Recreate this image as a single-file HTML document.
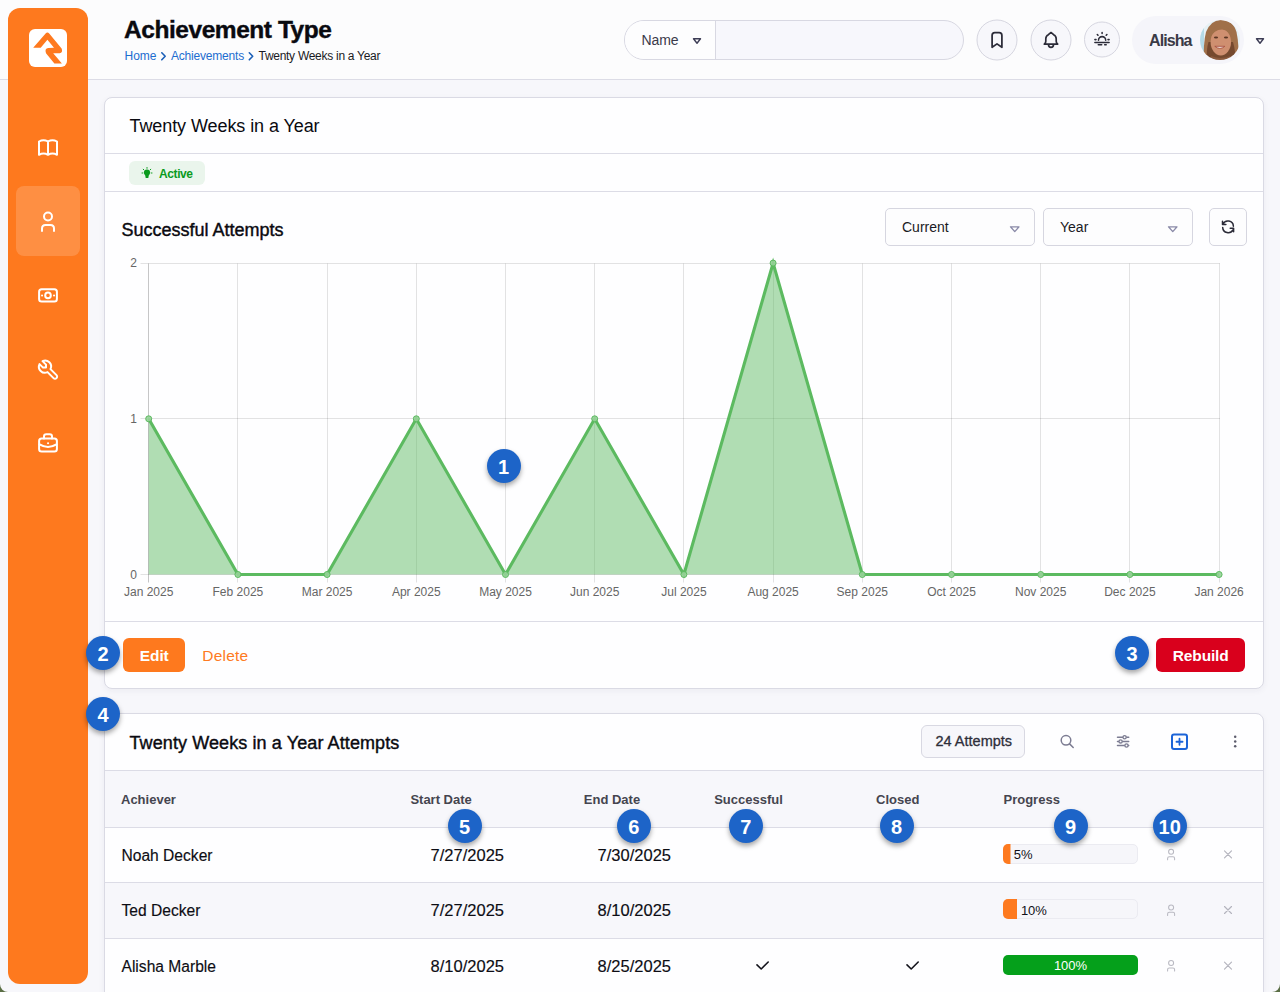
<!DOCTYPE html>
<html><head><meta charset="utf-8">
<style>
*{box-sizing:border-box;margin:0;padding:0}
html,body{width:1280px;height:992px;overflow:hidden}
body{background:#f7f7fb;font-family:"Liberation Sans",sans-serif;color:#0d0d12;position:relative}
.a{position:absolute}
.t{position:absolute;white-space:nowrap;line-height:1}
#hdr{left:0;top:0;width:1280px;height:80px;background:#fcfcfd;border-bottom:1px solid #dcdce6}
#side{left:8px;top:8px;width:80px;height:976px;background:#fe791e;border-radius:12px}
.card{position:absolute;background:#fefeff;border:1px solid #dadae4;border-radius:8px;box-shadow:0 2px 6px rgba(40,40,80,0.05)}
.hl{position:absolute;height:1px;background:#dcdce6}
.badge{position:absolute;width:34px;height:34px;border-radius:50%;background:#1d64c8;color:#fff;font-weight:700;font-size:20px;text-align:center;line-height:36.6px;box-shadow:0 3px 5px rgba(0,0,0,0.35)}
.ax{font-family:"Liberation Sans",sans-serif;font-size:12px;fill:#666}
</style></head><body>

<div id="hdr" class="a"></div>

<div class="t" style="left:124px;top:17.9px;font-size:24.5px;font-weight:700;letter-spacing:-0.45px;color:#0a0a10;-webkit-text-stroke:0.4px #0a0a10">Achievement Type</div>
<div class="t" style="left:124.5px;top:50.1px;font-size:12px;color:#1c6dd0">Home</div>
<svg class="a" style="left:0;top:0" width="400" height="80"><path d="M161.8,52.8 L165.2,56.3 L161.8,59.8" fill="none" stroke="#1a5fb8" stroke-width="1.6" stroke-linecap="round" stroke-linejoin="round"/><path d="M249.3,52.8 L252.7,56.3 L249.3,59.8" fill="none" stroke="#1a5fb8" stroke-width="1.6" stroke-linecap="round" stroke-linejoin="round"/></svg>
<div class="t" style="left:171px;top:50.1px;font-size:12px;letter-spacing:-0.2px;color:#1c6dd0">Achievements</div>
<div class="t" style="left:258.5px;top:50.1px;font-size:12px;letter-spacing:-0.28px;color:#1a1a24">Twenty Weeks in a Year</div>

<div class="a" style="left:624px;top:20px;width:340px;height:40px;border:1px solid #d8d8e2;border-radius:20px;background:#f7f7fc;overflow:hidden">
  <div class="a" style="left:0;top:0;width:91px;height:38px;background:#fdfdfe;border-right:1px solid #d8d8e2"></div>
</div>
<div class="t" style="left:641.5px;top:33.1px;font-size:14px;letter-spacing:-0.1px;color:#3a3a4a">Name</div>
<svg class="a" style="left:0;top:0" width="1280" height="80">
<path d="M693.5,38.8 L700.5,38.8 L697,43.2 Z" fill="none" stroke="#3c3c55" stroke-width="1.4" stroke-linejoin="round"/>
<circle cx="997" cy="40" r="20" fill="#f7f7fb" stroke="#d6d6e0" stroke-width="1"/>
<circle cx="1051" cy="40" r="20" fill="#f7f7fb" stroke="#d6d6e0" stroke-width="1"/>
<circle cx="1102" cy="39.5" r="17.5" fill="#f7f7fb" stroke="#d6d6e0" stroke-width="1"/>
<g fill="none" stroke="#2b2b38" stroke-width="1.9" stroke-linecap="round" stroke-linejoin="round">
<path d="M992.1,47.3 V35.4 Q992.1,32.7 994.8,32.7 H999.2 Q1001.9,32.7 1001.9,35.4 V47.3 L997,43.9 Z" stroke-width="1.75"/>
<path d="M1044.3,44.1 H1057.7 Q1056.2,42.8 1056.2,41.2 V38.8 Q1056.2,35.9 1053.6,34.7 Q1052,33.2 1051,32.5 Q1050,33.2 1048.4,34.7 Q1045.8,35.9 1045.8,38.8 V41.2 Q1045.8,42.8 1044.3,44.1 Z M1048.5,44.4 A2.5,2.9 0 0 0 1053.5,44.4" stroke-width="1.7"/>
<path d="M1094.9,42.4 H1109.1 M1098.5,40.2 A3.6,3.6 0 0 1 1105.7,40.2 M1102.1,32.4 v1.1 M1097.3,34.5 l0.7,0.7 M1106.9,34.5 l-0.7,0.7 M1094.9,39.6 h1.1 M1108,39.6 h1.1 M1098.3,44.8 h3.4 M1104.7,44.8 h1.5" stroke-width="1.55"/>
</g>
</svg>
<div class="a" style="left:1132px;top:16px;width:112px;height:48px;border-radius:24px;background:#f5f5fa"></div>
<div class="t" style="left:1149px;top:33.1px;font-size:16px;font-weight:700;letter-spacing:-0.9px;color:#3a3a46">Alisha</div>
<svg class="a" style="left:1196px;top:16px" width="48" height="48" viewBox="1196 16 48 48">
<defs><clipPath id="avc"><circle cx="1220" cy="40" r="20"/></clipPath>
<filter id="blr" x="-20%" y="-20%" width="140%" height="140%"><feGaussianBlur stdDeviation="0.7"/></filter></defs>
<g clip-path="url(#avc)"><g filter="url(#blr)">
<rect x="1196" y="16" width="48" height="48" fill="#e6f1f5"/>
<rect x="1199" y="26" width="5" height="26" fill="#b5dbe8"/>
<path d="M1204,62 Q1203,44 1206,32 Q1211,20 1221,20 Q1233,20 1236.5,32 Q1239.5,46 1238,62 Z" fill="#a06f4a"/>
<path d="M1207,62 Q1206,50 1208.5,42 L1233,42 Q1236,52 1235,62 Z" fill="#754a2f"/>
<ellipse cx="1220.8" cy="42" rx="10.2" ry="13.4" fill="#cf8f6f"/>
<path d="M1210,38 Q1211,27 1219,26 Q1228,25.5 1231.5,33 Q1232,36 1231.5,38 Q1229,30 1222,29.5 Q1214,29.5 1210,38 Z" fill="#a06f4a"/>
<path d="M1211,56 Q1220.8,60 1230.6,56 L1231,64 L1211,64 Z" fill="#8a5a3e"/>
<ellipse cx="1216" cy="37.6" rx="2.1" ry="1" fill="#5a3526"/>
<ellipse cx="1226" cy="37.6" rx="2.1" ry="1" fill="#5a3526"/>
<path d="M1214.8,46.3 Q1220,50.5 1224.8,46.3 Z" fill="#f4ece8" stroke="#a84f40" stroke-width="0.9"/>
</g></g></svg>
<svg class="a" style="left:0;top:0" width="1280" height="80"><path d="M1256.5,38.8 L1263.5,38.8 L1260,43.2 Z" fill="none" stroke="#3c3c55" stroke-width="1.4" stroke-linejoin="round"/></svg>
<div id="side" class="a"></div>
<div class="a" style="left:16px;top:186px;width:64px;height:70px;border-radius:8px;background:rgba(255,255,255,0.17)"></div>
<svg class="a" style="left:0;top:0" width="96" height="992" viewBox="0 0 96 992">
<rect x="29" y="29" width="38" height="38" rx="6" fill="#fff"/>
<path d="M33.2,47.8 L45.6,33.4 Q47.4,31.6 49.2,33.4 L61.6,48.6 Q63.2,52.8 59.6,53.2 L53.2,53.2 L61.9,63.5 L54.4,63.5 L46,53.2 Q44.3,48.3 48.3,48 L54,47.8 L47.4,39.7 L40.7,47.8 Z" fill="#fe791e"/>
<g fill="none" stroke="#fff" stroke-width="2" stroke-linecap="round" stroke-linejoin="round">
<path d="M39,141.5 Q43.5,139 48,141.5 Q52.5,139 57,141.5 L57,154.8 Q52.5,152.3 48,154.8 Q43.5,152.3 39,154.8 Z M48,141.5 L48,154.8"/>
<circle cx="48" cy="216.5" r="4"/>
<path d="M42,231 L42,228.5 Q42,225 45.5,225 L50.5,225 Q54,225 54,228.5 L54,231"/>
<rect x="39.1" y="289.2" width="17.8" height="12.4" rx="2.5"/>
<circle cx="48" cy="295.4" r="2.8"/>
<path d="M42,295.4 h0.1 M54,295.4 h0.1"/>
<path d="M41.3,366.1 h3v-3 l-3.5,-3.5 a6,6 0 0 1 8,8 l6,6 a2,2 0 0 1 -3,3 l-6,-6 a6,6 0 0 1 -8,-8 l3.5,3.5" transform="translate(1.7,1.5)"/>
<rect x="39.1" y="438.6" width="17.8" height="13" rx="2.5"/>
<path d="M44,438.6 V436.5 Q44,434.2 46.3,434.2 H49.7 Q52,434.2 52,436.5 V438.6"/>
<path d="M39.5,444.3 Q48,449.5 56.5,444.3"/>
<path d="M48,443.3 h0.1"/>
</g>
</svg>



<div class="card" style="left:104px;top:97px;width:1160px;height:592px"></div>
<div class="hl" style="left:105px;top:153px;width:1158px"></div>
<div class="hl" style="left:105px;top:191px;width:1158px"></div>
<div class="hl" style="left:105px;top:621px;width:1158px"></div>
<div class="t" style="left:129.5px;top:117.2px;font-size:18px;letter-spacing:-0.08px;color:#0a0a10">Twenty Weeks in a Year</div>
<div class="a" style="left:129px;top:161px;width:76px;height:24px;border-radius:6px;background:#eaf5ec"></div>
<svg class="a" style="left:0;top:0" width="300" height="200"><g fill="#0b9b1e"><circle cx="147" cy="172.6" r="3.1"/><path d="M145,174 L149,174 L148.3,178 L145.7,178 Z"/></g><g stroke="#0b9b1e" stroke-width="1" stroke-linecap="round"><path d="M147,167.5 v0.8 M143.2,169.2 l0.6,0.6 M150.8,169.2 l-0.6,0.6 M142,173 h0.8 M151.2,173 h0.8"/></g></svg>
<div class="t" style="left:159px;top:167.6px;font-size:12px;font-weight:700;letter-spacing:-0.4px;color:#0b9b1e">Active</div>
<div class="t" style="left:121.5px;top:220.7px;font-size:18px;letter-spacing:0px;color:#0a0a10;-webkit-text-stroke:0.4px #0a0a10">Successful Attempts</div>
<div class="a" style="left:885px;top:208px;width:150px;height:38px;border:1px solid #d6d6e0;border-radius:5px;background:#fdfdfe"></div>
<div class="a" style="left:1043px;top:208px;width:150px;height:38px;border:1px solid #d6d6e0;border-radius:5px;background:#fdfdfe"></div>
<div class="a" style="left:1209px;top:208px;width:38px;height:38px;border:1px solid #d6d6e0;border-radius:5px;background:#fdfdfe"></div>
<div class="t" style="left:902px;top:219.9px;font-size:14px;color:#1a1a24">Current</div>
<div class="t" style="left:1060px;top:219.9px;font-size:14px;color:#1a1a24">Year</div>
<svg class="a" style="left:0;top:0" width="1280" height="260">
<path d="M1010.5,226.8 L1019,226.8 L1014.75,231.6 Z" fill="none" stroke="#8a8aa8" stroke-width="1.3" stroke-linejoin="round"/>
<path d="M1168.5,226.8 L1177,226.8 L1172.75,231.6 Z" fill="none" stroke="#8a8aa8" stroke-width="1.3" stroke-linejoin="round"/>
<g fill="none" stroke="#2b2b38" stroke-width="1.6" stroke-linecap="round" stroke-linejoin="round">
<path d="M1222.9,224.2 A5.5,5.5 0 0 1 1233.4,226.2 M1222.5,221.2 V224.6 H1225.9" stroke-width="1.5"/>
<path d="M1222.7,227.6 A5.5,5.5 0 0 0 1233,229.9 M1230.2,228.3 H1233.6 V231.7" stroke-width="1.5"/>
</g></svg>
<svg class="a" style="left:0;top:0" width="1280" height="700">
<path d="M140.5,263.5 H1220" stroke="rgba(0,0,0,0.11)" stroke-width="1"/>
<path d="M140.5,418.5 H1220" stroke="rgba(0,0,0,0.11)" stroke-width="1"/>
<path d="M237.5,263.5 V582.5" stroke="rgba(0,0,0,0.11)" stroke-width="1"/>
<path d="M327.5,263.5 V582.5" stroke="rgba(0,0,0,0.11)" stroke-width="1"/>
<path d="M416.5,263.5 V582.5" stroke="rgba(0,0,0,0.11)" stroke-width="1"/>
<path d="M505.5,263.5 V582.5" stroke="rgba(0,0,0,0.11)" stroke-width="1"/>
<path d="M594.5,263.5 V582.5" stroke="rgba(0,0,0,0.11)" stroke-width="1"/>
<path d="M683.5,263.5 V582.5" stroke="rgba(0,0,0,0.11)" stroke-width="1"/>
<path d="M773.5,263.5 V582.5" stroke="rgba(0,0,0,0.11)" stroke-width="1"/>
<path d="M862.5,263.5 V582.5" stroke="rgba(0,0,0,0.11)" stroke-width="1"/>
<path d="M951.5,263.5 V582.5" stroke="rgba(0,0,0,0.11)" stroke-width="1"/>
<path d="M1040.5,263.5 V582.5" stroke="rgba(0,0,0,0.11)" stroke-width="1"/>
<path d="M1129.5,263.5 V582.5" stroke="rgba(0,0,0,0.11)" stroke-width="1"/>
<path d="M1219.5,263.5 V582.5" stroke="rgba(0,0,0,0.11)" stroke-width="1"/>
<polygon points="148.7,574.5 148.7,418.8 237.9,574.5 327.1,574.5 416.3,418.8 505.5,574.5 594.7,418.8 683.9,574.5 773.1,263.1 862.3,574.5 951.5,574.5 1040.7,574.5 1129.9,574.5 1219.1,574.5 1219.1,574.5" fill="rgba(92,186,96,0.48)"/>
<path d="M140.5,574.5 H1220" stroke="rgba(0,0,0,0.11)" stroke-width="1"/>
<path d="M148.5,263.5 V582.5" stroke="rgba(0,0,0,0.22)" stroke-width="1"/>
<polyline points="148.7,418.8 237.9,574.5 327.1,574.5 416.3,418.8 505.5,574.5 594.7,418.8 683.9,574.5 773.1,263.1 862.3,574.5 951.5,574.5 1040.7,574.5 1129.9,574.5 1219.1,574.5" fill="none" stroke="#5cba60" stroke-width="3.1" stroke-linejoin="miter"/>
<circle cx="148.7" cy="418.8" r="3" fill="rgba(150,210,152,0.9)" stroke="#5cba60" stroke-width="1"/>
<circle cx="237.9" cy="574.5" r="3" fill="rgba(150,210,152,0.9)" stroke="#5cba60" stroke-width="1"/>
<circle cx="327.1" cy="574.5" r="3" fill="rgba(150,210,152,0.9)" stroke="#5cba60" stroke-width="1"/>
<circle cx="416.3" cy="418.8" r="3" fill="rgba(150,210,152,0.9)" stroke="#5cba60" stroke-width="1"/>
<circle cx="505.5" cy="574.5" r="3" fill="rgba(150,210,152,0.9)" stroke="#5cba60" stroke-width="1"/>
<circle cx="594.7" cy="418.8" r="3" fill="rgba(150,210,152,0.9)" stroke="#5cba60" stroke-width="1"/>
<circle cx="683.9" cy="574.5" r="3" fill="rgba(150,210,152,0.9)" stroke="#5cba60" stroke-width="1"/>
<circle cx="773.1" cy="263.1" r="3" fill="rgba(150,210,152,0.9)" stroke="#5cba60" stroke-width="1"/>
<circle cx="862.3" cy="574.5" r="3" fill="rgba(150,210,152,0.9)" stroke="#5cba60" stroke-width="1"/>
<circle cx="951.5" cy="574.5" r="3" fill="rgba(150,210,152,0.9)" stroke="#5cba60" stroke-width="1"/>
<circle cx="1040.7" cy="574.5" r="3" fill="rgba(150,210,152,0.9)" stroke="#5cba60" stroke-width="1"/>
<circle cx="1129.9" cy="574.5" r="3" fill="rgba(150,210,152,0.9)" stroke="#5cba60" stroke-width="1"/>
<circle cx="1219.1" cy="574.5" r="3" fill="rgba(150,210,152,0.9)" stroke="#5cba60" stroke-width="1"/>
<text class="ax" x="137" y="267.40000000000003" text-anchor="end">2</text>
<text class="ax" x="137" y="423.1" text-anchor="end">1</text>
<text class="ax" x="137" y="578.8" text-anchor="end">0</text>
<text class="ax" x="148.7" y="596" text-anchor="middle">Jan 2025</text>
<text class="ax" x="237.9" y="596" text-anchor="middle">Feb 2025</text>
<text class="ax" x="327.1" y="596" text-anchor="middle">Mar 2025</text>
<text class="ax" x="416.3" y="596" text-anchor="middle">Apr 2025</text>
<text class="ax" x="505.5" y="596" text-anchor="middle">May 2025</text>
<text class="ax" x="594.7" y="596" text-anchor="middle">Jun 2025</text>
<text class="ax" x="683.9" y="596" text-anchor="middle">Jul 2025</text>
<text class="ax" x="773.1" y="596" text-anchor="middle">Aug 2025</text>
<text class="ax" x="862.3" y="596" text-anchor="middle">Sep 2025</text>
<text class="ax" x="951.5" y="596" text-anchor="middle">Oct 2025</text>
<text class="ax" x="1040.7" y="596" text-anchor="middle">Nov 2025</text>
<text class="ax" x="1129.9" y="596" text-anchor="middle">Dec 2025</text>
<text class="ax" x="1219.1" y="596" text-anchor="middle">Jan 2026</text>
</svg>
<div class="a" style="left:123px;top:638px;width:62px;height:34px;border-radius:6px;background:#fe791e"></div>
<div class="t" style="left:139.8px;top:647.6px;font-size:15.5px;font-weight:700;letter-spacing:-0.1px;color:#fff">Edit</div>
<div class="t" style="left:202.3px;top:647.6px;font-size:15.5px;letter-spacing:0.2px;color:#fe7a22">Delete</div>
<div class="a" style="left:1156px;top:638px;width:89px;height:34px;border-radius:6px;background:#d9001c"></div>
<div class="t" style="left:1172.8px;top:647.6px;font-size:15.5px;font-weight:700;letter-spacing:-0.15px;color:#fff">Rebuild</div>

<div class="card" style="left:104px;top:713px;width:1160px;height:300px"></div>
<div class="a" style="left:105px;top:771px;width:1158px;height:56px;background:#f7f7fb"></div>
<div class="a" style="left:105px;top:883px;width:1158px;height:55px;background:#f7f7fb"></div>
<div class="hl" style="left:105px;top:770px;width:1158px"></div>
<div class="hl" style="left:105px;top:827px;width:1158px"></div>
<div class="hl" style="left:105px;top:882px;width:1158px"></div>
<div class="hl" style="left:105px;top:938px;width:1158px"></div>
<div class="t" style="left:129.5px;top:733.56px;font-size:18px;letter-spacing:0.1px;color:#0a0a10;-webkit-text-stroke:0.4px #0a0a10">Twenty Weeks in a Year Attempts</div>
<div class="a" style="left:921px;top:725px;width:104px;height:33px;border:1px solid #d8d8e2;border-radius:6px;background:#f7f7fb"></div>
<div class="t" style="left:935.5px;top:734.45px;font-size:14.5px;letter-spacing:0px;color:#2e2e3a;-webkit-text-stroke:0.3px #2e2e3a">24 Attempts</div>
<svg class="a" style="left:0;top:0" width="1280" height="992">
<g fill="none" stroke="#7c7c92" stroke-width="1.5" stroke-linecap="round">
<circle cx="1066" cy="740.3" r="4.8"/><path d="M1069.6,743.9 L1073.2,747.5"/>
<path d="M1117.5,737.2 H1128.7 M1117.5,741.4 H1128.7 M1117.5,745.5 H1128.7"/>
</g>
<g fill="#fdfdfe" stroke="#7c7c92" stroke-width="1.3"><circle cx="1124.6" cy="737.2" r="1.6"/><circle cx="1120.6" cy="741.4" r="1.6"/><circle cx="1126.5" cy="745.5" r="1.6"/></g>
<rect x="1172" y="734.5" width="15" height="14.5" rx="2" fill="none" stroke="#1c64d8" stroke-width="2"/>
<path d="M1179.5,738.7 V744.8 M1176.45,741.75 H1182.55" stroke="#1c64d8" stroke-width="1.8" stroke-linecap="round"/>
<g fill="#5c5c6c"><circle cx="1235.2" cy="736.8" r="1.25"/><circle cx="1235.2" cy="741.5" r="1.25"/><circle cx="1235.2" cy="746.2" r="1.25"/></g>
</svg>
<div class="t" style="left:121px;top:792.8px;font-size:13px;font-weight:700;color:#45454f">Achiever</div>
<div class="t" style="left:410.4px;top:792.8px;font-size:13px;font-weight:700;color:#45454f">Start Date</div>
<div class="t" style="left:583.8px;top:792.8px;font-size:13px;font-weight:700;color:#45454f">End Date</div>
<div class="t" style="left:714.2px;top:792.8px;font-size:13px;font-weight:700;color:#45454f">Successful</div>
<div class="t" style="left:876px;top:792.8px;font-size:13px;font-weight:700;color:#45454f">Closed</div>
<div class="t" style="left:1003.5px;top:792.8px;font-size:13px;font-weight:700;color:#45454f">Progress</div>
<div class="t" style="left:121.5px;top:847.69px;font-size:15.6px;color:#0d0d14;-webkit-text-stroke:0.15px #0d0d14">Noah Decker</div>
<div class="t" style="left:304px;width:200px;text-align:right;top:846.94px;font-size:16.5px;color:#0d0d14;-webkit-text-stroke:0.15px #0d0d14">7/27/2025</div>
<div class="t" style="left:471px;width:200px;text-align:right;top:846.94px;font-size:16.5px;color:#0d0d14;-webkit-text-stroke:0.15px #0d0d14">7/30/2025</div>
<svg class="a" style="left:1002px;top:843px" width="137" height="22"><defs><clipPath id="cb844"><rect x="1" y="1" width="135" height="20" rx="5"/></clipPath></defs><rect x="1.5" y="1.5" width="134" height="19" rx="4.5" fill="#f6f6fa" stroke="#ebebf1" stroke-width="1"/><rect x="1" y="1" width="7.5" height="20" fill="#fe7a1f" clip-path="url(#cb844)"/></svg>
<div class="t" style="left:1013.8px;top:848.4px;font-size:13px;color:#111118">5%</div>
<div class="t" style="left:121.5px;top:903.09px;font-size:15.6px;color:#0d0d14;-webkit-text-stroke:0.15px #0d0d14">Ted Decker</div>
<div class="t" style="left:304px;width:200px;text-align:right;top:902.34px;font-size:16.5px;color:#0d0d14;-webkit-text-stroke:0.15px #0d0d14">7/27/2025</div>
<div class="t" style="left:471px;width:200px;text-align:right;top:902.34px;font-size:16.5px;color:#0d0d14;-webkit-text-stroke:0.15px #0d0d14">8/10/2025</div>
<svg class="a" style="left:1002px;top:898px" width="137" height="22"><defs><clipPath id="cb899"><rect x="1" y="1" width="135" height="20" rx="5"/></clipPath></defs><rect x="1.5" y="1.5" width="134" height="19" rx="4.5" fill="#f6f6fa" stroke="#ebebf1" stroke-width="1"/><rect x="1" y="1" width="14" height="20" fill="#fe7a1f" clip-path="url(#cb899)"/></svg>
<div class="t" style="left:1020.9px;top:903.9px;font-size:13px;color:#111118">10%</div>
<div class="t" style="left:121.5px;top:958.69px;font-size:15.6px;color:#0d0d14;-webkit-text-stroke:0.15px #0d0d14">Alisha Marble</div>
<div class="t" style="left:304px;width:200px;text-align:right;top:957.94px;font-size:16.5px;color:#0d0d14;-webkit-text-stroke:0.15px #0d0d14">8/10/2025</div>
<div class="t" style="left:471px;width:200px;text-align:right;top:957.94px;font-size:16.5px;color:#0d0d14;-webkit-text-stroke:0.15px #0d0d14">8/25/2025</div>
<div class="a" style="left:1003px;top:955px;width:135px;height:20px;border-radius:5px;background:#05a01b"></div>
<div class="t" style="left:1003px;width:135px;text-align:center;top:959.4px;font-size:13px;color:#fff">100%</div>
<svg class="a" style="left:0;top:0" width="1280" height="992"><g fill="none" stroke="#b9b9c2" stroke-width="1.05" stroke-linecap="round"><circle cx="1171.1" cy="851.8" r="2.5"/><path d="M1167.6,859.8 V858.4 Q1167.6,856.6999999999999 1169.3,856.6999999999999 H1173 Q1174.6,856.6999999999999 1174.6,858.4 V859.8"/><path d="M1224.5,850.9 L1231.5,857.9 M1231.5,850.9 L1224.5,857.9" stroke="#b4b4be" stroke-width="1.15"/><circle cx="1171.1" cy="907.4" r="2.5"/><path d="M1167.6,915.4 V914.0 Q1167.6,912.3 1169.3,912.3 H1173 Q1174.6,912.3 1174.6,914.0 V915.4"/><path d="M1224.5,906.5 L1231.5,913.5 M1231.5,906.5 L1224.5,913.5" stroke="#b4b4be" stroke-width="1.15"/><circle cx="1171.1" cy="963.0" r="2.5"/><path d="M1167.6,971.0 V969.6 Q1167.6,967.9 1169.3,967.9 H1173 Q1174.6,967.9 1174.6,969.6 V971.0"/><path d="M1224.5,962.1 L1231.5,969.1 M1231.5,962.1 L1224.5,969.1" stroke="#b4b4be" stroke-width="1.15"/></g><g fill="none" stroke="#14141c" stroke-width="1.6" stroke-linecap="round" stroke-linejoin="round"><path d="M757,964.9 L761.2,969 L768.2,962"/><path d="M907,964.9 L911.2,969 L918.2,962"/></g></svg>
<div class="badge" style="left:486.5px;top:449.0px">1</div>
<div class="badge" style="left:86px;top:636.0px">2</div>
<div class="badge" style="left:1115px;top:635.5px">3</div>
<div class="badge" style="left:86px;top:696.5px">4</div>
<div class="badge" style="left:447.5px;top:808.8px">5</div>
<div class="badge" style="left:616.8px;top:808.8px">6</div>
<div class="badge" style="left:728.8px;top:808.8px">7</div>
<div class="badge" style="left:879.5px;top:808.8px">8</div>
<div class="badge" style="left:1053.5px;top:808.8px">9</div>
<div class="badge" style="left:1152.7px;top:808.8px">10</div>
<svg class="a" style="left:0;top:0" width="1280" height="992"><path d="M0,984 A8,8 0 0 0 8,992 L0,992 Z" fill="#5a6e45"/><path d="M1280,984 A8,8 0 0 1 1272,992 L1280,992 Z" fill="#5a6e45"/></svg>
</body></html>
